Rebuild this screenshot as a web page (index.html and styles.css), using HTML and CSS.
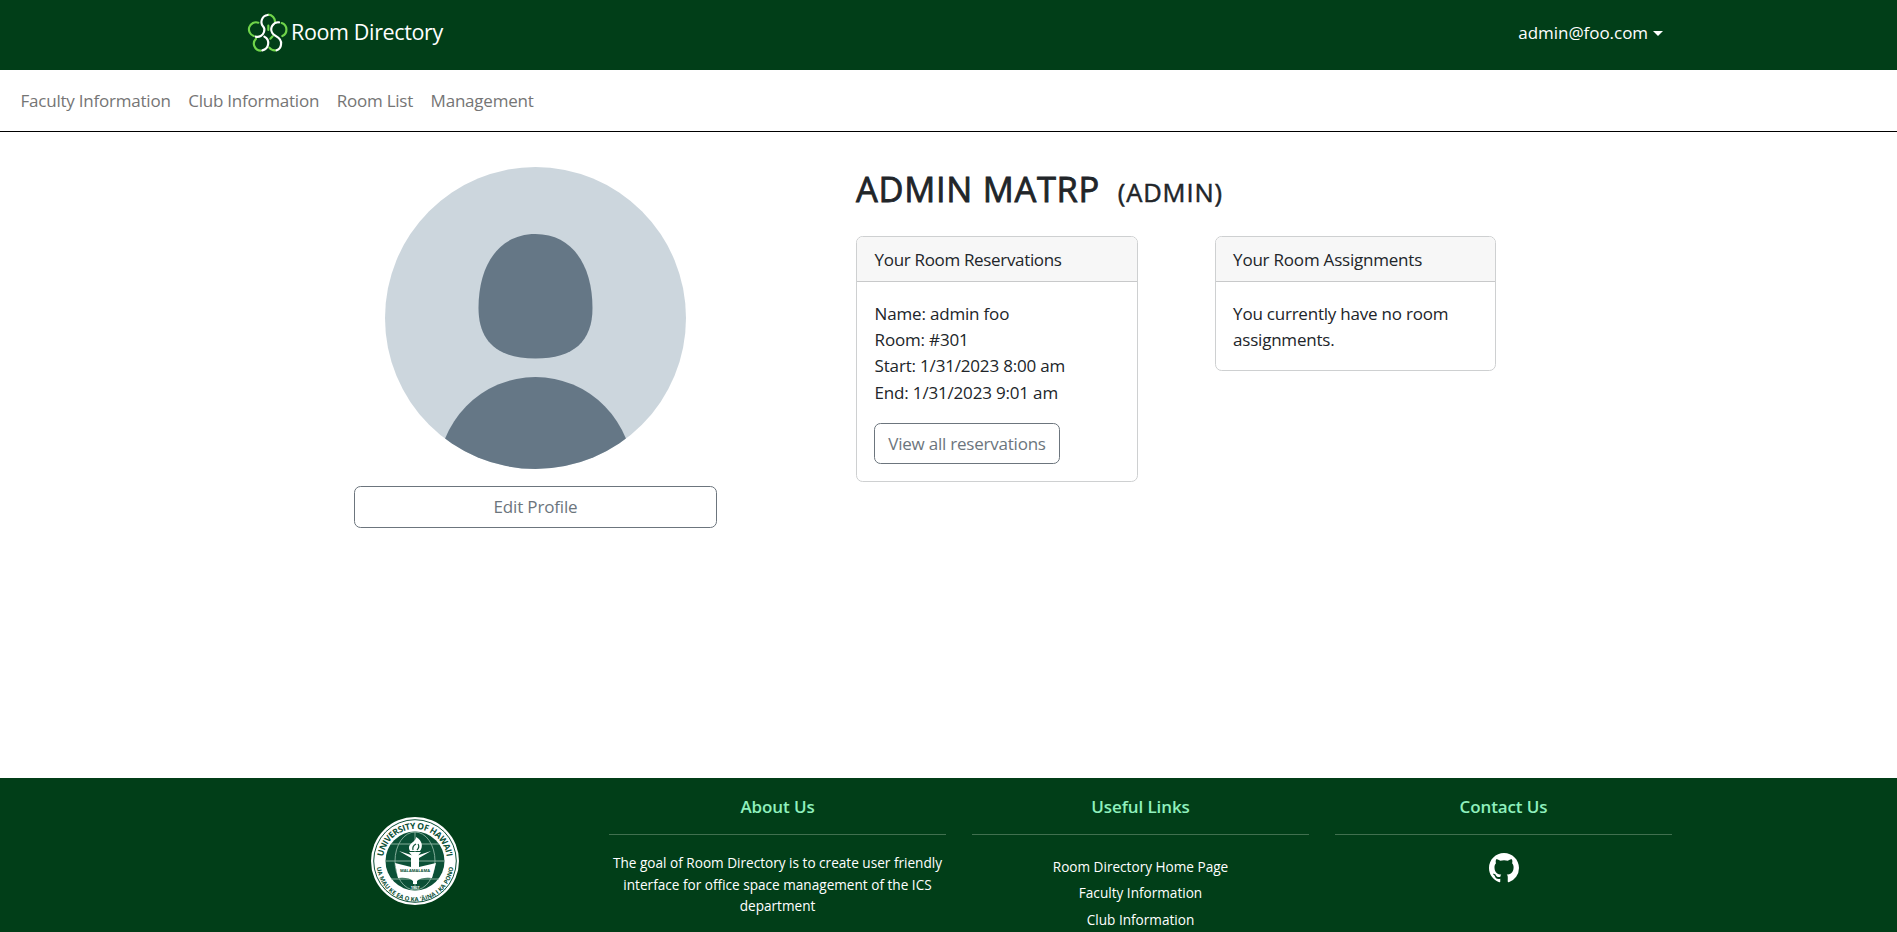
FILE: index.html
```html
<!DOCTYPE html>
<html lang="en">
<head>
<meta charset="utf-8">
<title>Room Directory</title>
<link rel="stylesheet" href="styles.css">
</head>
<body>
<header class="topbar">
  <a class="brand">
    <svg class="logo" viewBox="0 0 138 144" fill="none" stroke-width="6.5" stroke-linecap="round">
      <g stroke="#6fd44a">
        <path d="M70 20A21 21 0 0 1 90 42"/>
        <path d="M40 44A21 21 0 0 0 26 84"/>
        <path d="M33 92A21 21 0 0 0 47 128"/>
        <path d="M110 45A21 21 0 0 1 112 84"/>
        <path d="M73 119A21 21 0 0 0 92 127"/>
        <path d="M70 53V66M76 92L83 85"/>
      </g>
      <g stroke="#fff">
        <path d="M68 21A21 21 0 0 0 54 55C60 61 59 66 57 72A21 21 0 0 1 32 86"/>
        <path d="M102 43A21 21 0 0 0 82 75C88 86 112 88 108 110A20 20 0 0 1 95 127"/>
        <path d="M58 86A22 22 0 0 1 52 127"/>
      </g>
    </svg>
    <span>Room Directory</span>
  </a>
  <a class="account">admin@foo.com<i class="caret"></i></a>
</header>
<nav class="menu">
  <a>Faculty Information</a><a>Club Information</a><a>Room List</a><a>Management</a>
</nav>
<main class="profile">
  <section class="person">
    <svg class="avatar" viewBox="0 0 301 302">
      <defs><clipPath id="round"><ellipse cx="150.5" cy="151" rx="150.5" ry="151"/></clipPath></defs>
      <g clip-path="url(#round)">
        <rect width="301" height="302" fill="#ccd6dd"/>
        <path fill="#657786" d="M150.500 67C187 67 207.500 98 207.500 141C207.500 174 189 191.500 150.500 191.500C112 191.500 93.500 174 93.500 141C93.500 98 114 67 150.500 67Z"/>
        <ellipse cx="150.500" cy="310" rx="98" ry="100" fill="#657786"/>
      </g>
    </svg>
    <button class="btn wide">Edit Profile</button>
  </section>
  <section class="details">
    <h1>ADMIN MATRP <small>(ADMIN)</small></h1>
    <div class="cards">
      <article class="card">
        <h2>Your Room Reservations</h2>
        <div class="card-body">
          <p class="booking">Name: admin foo<br>Room: #301<br>Start: 1/31/2023 8:00 am<br>End: 1/31/2023 9:01 am</p>
          <button class="btn">View all reservations</button>
        </div>
      </article>
      <article class="card">
        <h2 class="assign">Your Room Assignments</h2>
        <div class="card-body"><p>You currently have no room assignments.</p></div>
      </article>
    </div>
  </section>
</main>
<footer class="footer">
  <div class="seal-box">
    <svg class="seal" viewBox="0 0 88 88">
      <defs>
        <path id="arcTop" d="M12 44A32 32 0 0 1 76 44"/>
        <path id="arcBottom" d="M5.500 46A38.500 38.500 0 0 0 82.500 46"/>
      </defs>
      <circle cx="44" cy="44" r="44" fill="#fff"/>
      <circle cx="44" cy="44" r="41.300" fill="none" stroke="#0b5036" stroke-width="1"/>
      <circle cx="44" cy="44" r="29.500" fill="#0b5036"/>
      <g fill="none" stroke="#8fb5a4" stroke-width=".9">
        <ellipse cx="44" cy="44" rx="20" ry="29"/>
        <path d="M44 15V73M15 44H73M20 27H68M20 62H68"/>
      </g>
      <path fill="#fff" d="M24 46L40 50V41L28 34L43 39H45L60 34L48 41V50L65 46L61 61Q50 60 46 64V67H42V64Q38 60 27 61Z"/>
      <path fill="#fff" d="M38 35H50L46 40V44H42V40ZM39 34C35 26 45 26 45 20C52 24 52 30 49 34Z"/>
      <path fill="none" stroke="#0b5036" stroke-width="1.200" d="M42 33Q41 29 45 27M46 33Q49 30 47 27"/>
      <g fill="#0b5036" class="seal-text">
        <text font-size="8.600" text-anchor="middle"><textPath href="#arcTop" startOffset="50%" textLength="92">UNIVERSITY OF HAWAI‘I</textPath></text>
        <text font-size="6" text-anchor="middle"><textPath href="#arcBottom" startOffset="50%" textLength="112">UA MAU KE EA O KA ‘ĀINA I KA PONO</textPath></text>
        <text font-size="4" x="44" y="55" text-anchor="middle" textLength="30">MALAMALAMA</text>
      </g>
      <text class="seal-text" fill="#fff" font-size="3.800" x="44" y="71.500" text-anchor="middle">1907</text>
    </svg>
  </div>
  <section class="col">
    <h3>About Us</h3><hr>
    <p class="about">The goal of Room Directory is to create user friendly<br>interface for office space management of the ICS<br>department</p>
  </section>
  <section class="col">
    <h3>Useful Links</h3><hr>
    <ul><li>Room Directory Home Page</li><li>Faculty Information</li><li>Club Information</li></ul>
  </section>
  <section class="col">
    <h3>Contact Us</h3><hr>
    <svg class="github" viewBox="0 0 16 16" fill="#fff"><path d="M8 0C3.580 0 0 3.580 0 8c0 3.540 2.290 6.530 5.470 7.590.4.070.55-.17.55-.38 0-.19-.01-.82-.01-1.490-2.010.37-2.530-.49-2.690-.94-.09-.23-.48-.94-.82-1.130-.28-.15-.68-.52-.01-.53.63-.01 1.080.58 1.230.82.72 1.210 1.870.87 2.330.66.07-.52.28-.87.51-1.070-1.780-.2-3.640-.89-3.640-3.950 0-.87.31-1.590.82-2.150-.08-.2-.36-1.020.08-2.120 0 0 .67-.21 2.200.82.64-.18 1.320-.27 2-.27s1.360.09 2 .27c1.530-1.040 2.200-.82 2.200-.82.44 1.100.16 1.920.08 2.120.51.56.82 1.270.82 2.150 0 3.070-1.870 3.750-3.650 3.950.29.25.54.73.54 1.480 0 1.070-.01 1.930-.01 2.200 0 .21.15.46.55.38A8.010 8.010 0 0 0 16 8c0-4.420-3.580-8-8-8z"/></svg>
  </section>
</footer>
</body>
</html>
```
FILE: styles.css
```css
* { box-sizing: border-box; }
body {
  margin: 0;
  display: flex;
  flex-direction: column;
  height: 932px;
  overflow: hidden;
  background: #fff;
  color: #212529;
  font: 17px/26.4px "Open Sans", "Noto Sans", sans-serif;
  letter-spacing: -.18px;
}
h1, h2, h3, p, ul { margin: 0; padding: 0; font-weight: 400; }

.topbar {
  flex: none;
  display: flex;
  justify-content: space-between;
  height: 70px;
  padding: 8px 234px 0 245px;
  background: #013e18;
  color: #fff;
}
.brand { display: flex; font-size: 21.5px; letter-spacing: -.36px; line-height: 47px; }
.logo { width: 46px; height: 48px; }
.account { display: flex; align-items: center; height: 51px; letter-spacing: -.05px; }
.caret {
  margin-left: 5px;
  border: 5px solid transparent;
  border-top-color: #fff;
  border-bottom: 0;
}

.menu {
  flex: none;
  display: flex;
  align-items: center;
  gap: 17.500px;
  height: 62px;
  padding: 2px 20.500px 0;
  border-bottom: 1px solid #000;
  color: #757575;
  letter-spacing: -.22px;
}

.profile {
  flex: none;
  display: grid;
  grid-template-columns: 363px 640px;
  column-gap: 139px;
  height: 646px;
  padding: 35px 0 0 354px;
}
.person { display: flex; flex-direction: column; align-items: center; }
.avatar { width: 301px; height: 302px; margin-bottom: 17px; }
.btn {
  display: block;
  height: 41px;
  width: 186px;
  margin-left: -.600px;
  padding: 0;
  border: 1px solid #6c757d;
  border-radius: 6.600px;
  background: #fff;
  color: #6c757d;
  font: inherit;
  letter-spacing: -.22px;
}
.wide { width: 363px; height: 42px; margin: 0; padding-top: 1px; letter-spacing: -.15px; }

.details h1 {
  height: 69px;
  padding-top: 1px;
  font-size: 34.500px;
  line-height: 42px;
  letter-spacing: .7px;
  -webkit-text-stroke: .8px #212529;
}
.details small {
  margin-left: 8px;
  font-size: 25.500px;
  letter-spacing: .9px;
  -webkit-text-stroke-width: .5px;
}
.cards { display: flex; align-items: flex-start; gap: 77px; }
.card { width: 281.500px; border: 1px solid #ced0d1; border-radius: 6.600px; overflow: hidden; }
.card h2 {
  height: 45px;
  padding: 10px 17.600px 0;
  background: #f7f7f7;
  border-bottom: 1px solid #c8c9ca;
  font-size: 17px;
  letter-spacing: -.33px;
}
.card h2.assign { letter-spacing: -.21px; }
.card-body { padding: 18.600px 17.600px 17px; }
.card-body p { letter-spacing: -.22px; }
.card-body .booking { margin-bottom: 17px; letter-spacing: -.18px; }

.footer {
  flex: 1;
  display: grid;
  grid-template-columns: 337px 337px 337px 337px;
  column-gap: 26px;
  padding: 16px 0 0 246px;
  background: #013e18;
  color: #fff;
  text-align: center;
}
.seal-box { display: flex; align-items: flex-start; }
.seal { display: block; width: 88px; height: 88px; margin: 23px auto 0; }
.seal-text { font-family: "Open Sans", sans-serif; font-weight: 700; letter-spacing: 0; }
.col h3 {
  font-size: 17px;
  font-weight: 600;
  line-height: 26px;
  letter-spacing: -.1px;
  color: #8ff0bd;
}
.col hr { margin: 14px 0 17px; border: 0; border-top: 1px solid #41704f; }
.about { font-size: 13.600px; line-height: 21.600px; letter-spacing: 0; }
.col ul { list-style: none; font-size: 13.600px; letter-spacing: 0; padding-top: 2px; }
.github { display: block; width: 30px; height: 30px; margin: 18px auto 0; }
```
